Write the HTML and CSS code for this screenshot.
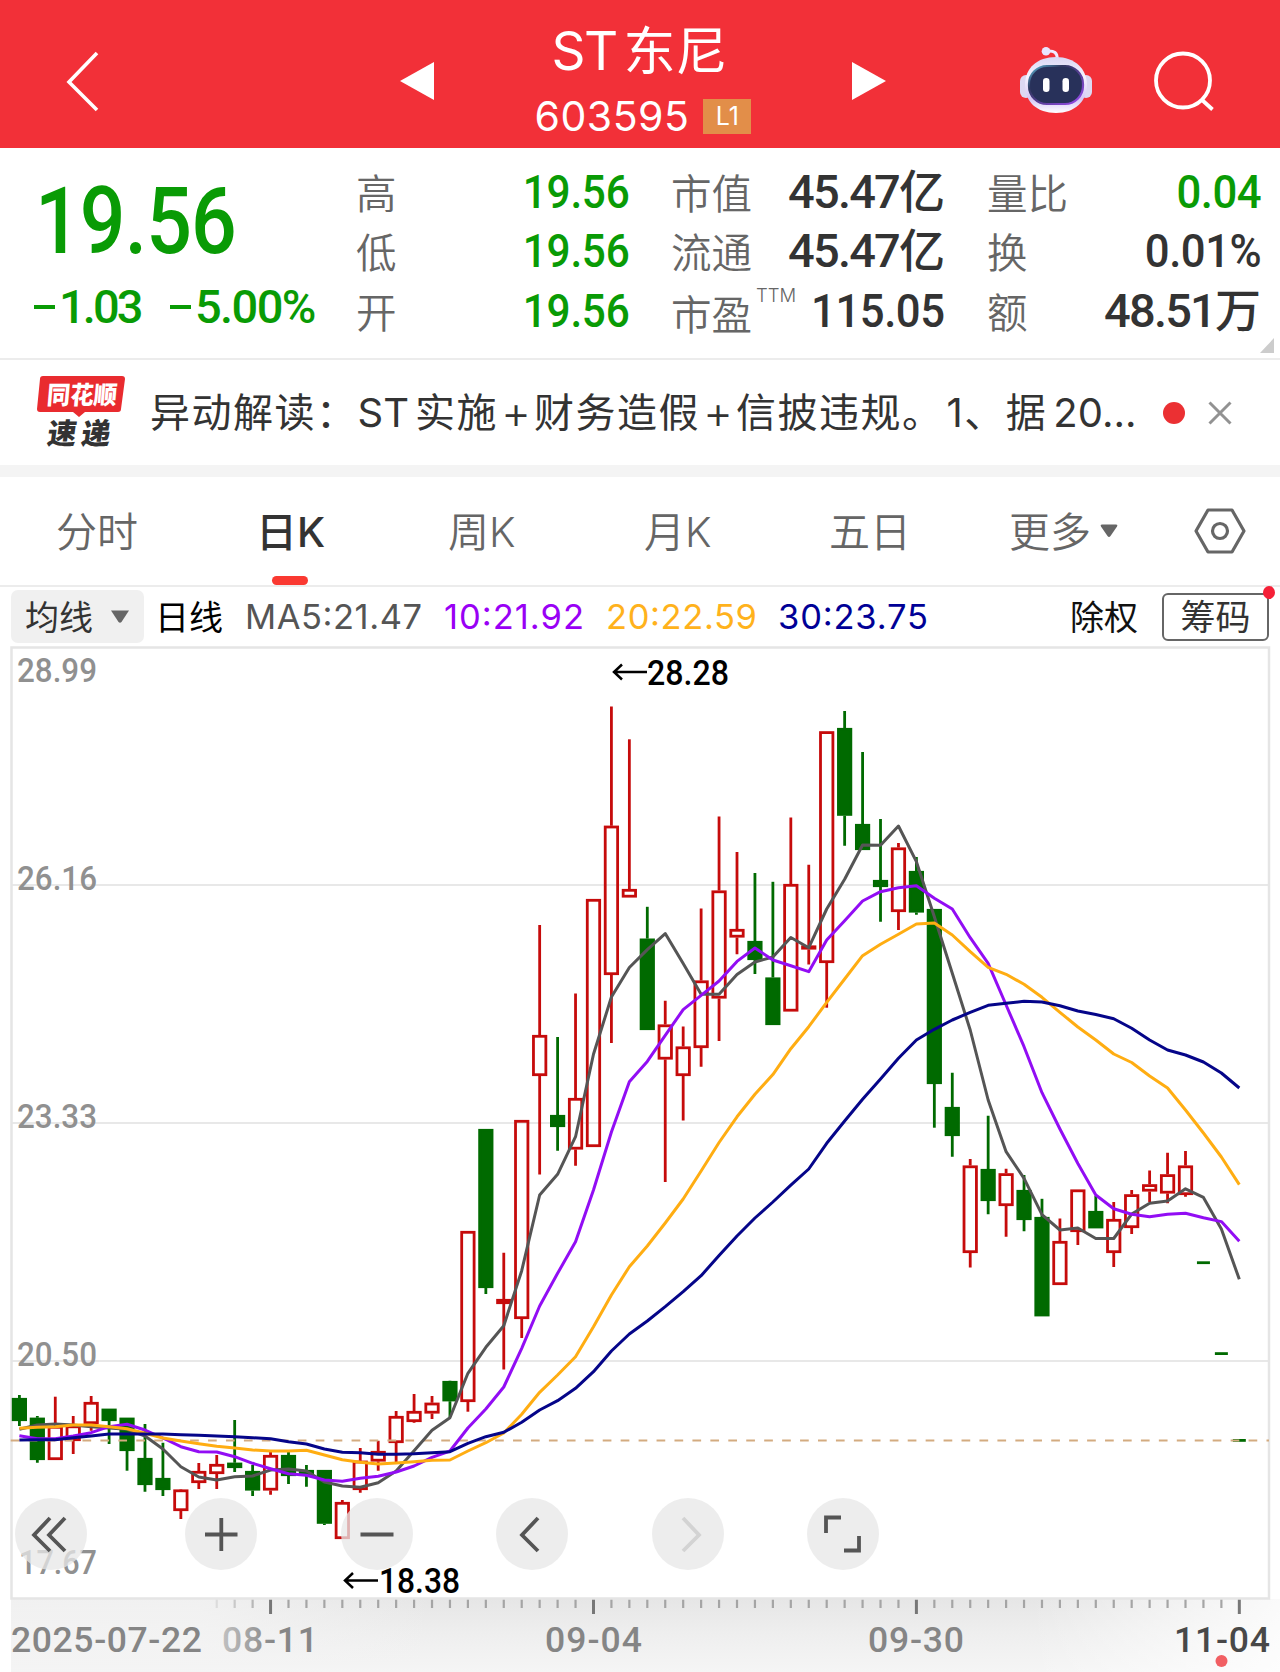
FILE: index.html
```html
<!DOCTYPE html>
<html lang="zh-CN">
<head>
<meta charset="utf-8">
<title>ST东尼 603595</title>
<link rel="stylesheet" href="styles.css">
</head>
<body>
<header class="topbar">
  <svg class="back" viewBox="0 0 34 62" width="34" height="62"><path d="M32 3 4 32 32 60" fill="none" stroke="#fff" stroke-width="3.6"/></svg>
  <svg class="prev" viewBox="0 0 34 38" width="34" height="38"><path d="M0 19 34 0V38Z" fill="#fff"/></svg>
  <div class="stock">
    <div class="name">ST<span class="name-cn">东尼</span></div>
    <div class="code">603595<span class="level">L1</span></div>
  </div>
  <svg class="next" viewBox="0 0 34 38" width="34" height="38"><path d="M34 19 0 0V38Z" fill="#fff"/></svg>
  <svg class="robot" viewBox="0 0 72 68" width="72" height="68">
    <defs>
      <linearGradient id="shell" x1="0" y1="0" x2="0" y2="1"><stop offset="0" stop-color="#d9d6f3"/><stop offset=".35" stop-color="#f7f4ff"/><stop offset=".75" stop-color="#d5c7f5"/><stop offset="1" stop-color="#fff"/></linearGradient>
      <linearGradient id="rim" x1="0" y1="0" x2="1" y2="1"><stop offset="0" stop-color="#60bcdc"/><stop offset=".3" stop-color="#30375f"/><stop offset="1" stop-color="#9b4cf0"/></linearGradient>
    </defs>
    <path d="M27 4q11-1 10 8" fill="none" stroke="#f0eaff" stroke-width="3"/><circle cx="26" cy="4.300" r="4.300" fill="#e9e4ff"/>
    <rect x="0" y="28" width="12" height="23" rx="6" fill="#ddd8f2"/><rect x="60" y="28" width="12" height="23" rx="6" fill="#ddd8f2"/>
    <path d="M36 10C55 10 67 22 67 38S55 66 36 66 5 55 5 38 17 10 36 10Z" fill="url(#shell)"/>
    <rect x="9" y="19" width="54" height="38" rx="18" fill="#28315a" stroke="url(#rim)" stroke-width="2.2"/>
    <rect x="23" y="31" width="6.5" height="14" rx="3.2" fill="#fff"/><rect x="42.500" y="31" width="6.500" height="14" rx="3.200" fill="#fff"/>
  </svg>
  <svg class="search" viewBox="0 0 62 62" width="62" height="62"><g fill="none" stroke="#fff" stroke-width="3.800"><circle cx="30" cy="30.500" r="27"/><path d="M48.500 49.500 59.500 59.500"/></g></svg>
</header>

<section class="quote">
  <div class="price">
    <div class="last">19.56</div>
    <div class="change"><span class="diff"><i class="minus"></i>1.03</span><span class="percent"><i class="minus"></i>5.00%</span></div>
  </div>
  <dl class="col col-a">
    <div><dt>高</dt><dd class="down">19.56</dd></div>
    <div><dt>低</dt><dd class="down">19.56</dd></div>
    <div><dt>开</dt><dd class="down">19.56</dd></div>
  </dl>
  <dl class="col col-b">
    <div><dt>市值</dt><dd>45.47<b>亿</b></dd></div>
    <div><dt>流通</dt><dd>45.47<b>亿</b></dd></div>
    <div><dt class="pe">市盈<sup>TTM</sup></dt><dd class="plain">115.05</dd></div>
  </dl>
  <dl class="col col-c">
    <div><dt>量比</dt><dd class="down plain">0.04</dd></div>
    <div><dt>换</dt><dd class="plain">0.01%</dd></div>
    <div><dt>额</dt><dd>48.51<b>万</b></dd></div>
  </dl>
  <i class="corner"></i>
</section>

<section class="news">
  <div class="brand">
    <svg viewBox="0 0 90 44" width="90" height="44"><path d="M6 2H85q3 0 3 3L84 35q0 3-3 3H48l-6 5-6-5H3q-3 0-3-3L3 5q0-3 3-3Z" fill="#e92b2f"/><text x="12" y="30" textLength="70" lengthAdjust="spacingAndGlyphs" class="brand-top" transform="skewX(-5)">同花顺</text></svg>
    <div class="brand-bottom">速递</div>
  </div>
  <p class="headline">异动解读：<span class="st">ST</span>实施<span class="plus">+</span>财务造假<span class="plus">+</span>信披违规。<span class="one">1</span>、据<span class="yr">20...</span></p>
  <i class="unread"></i>
  <svg class="close" viewBox="0 0 24 24" width="24" height="24"><path d="M1.500 1.500 22.500 22.500M22.500 1.500 1.500 22.500" stroke="#929292" stroke-width="3"/></svg>
</section>

<nav class="tabs">
  <span class="tab t1">分时</span>
  <span class="tab t2 active">日K</span>
  <span class="tab t3">周K</span>
  <span class="tab t4">月K</span>
  <span class="tab t5">五日</span>
  <span class="tab t6">更多<svg viewBox="0 0 18 14" width="18" height="14"><path d="M2 .5H16Q18 .5 17 2.500L10.500 12Q9 14 7.500 12L1 2.500Q0 .5 2 .5Z" fill="#666"/></svg></span>
  <svg class="hex" viewBox="0 0 52 48" width="52" height="48"><g fill="none" stroke="#666" stroke-width="3.200"><path d="M14 3H38L50 24 38 45H14L2 24Z" stroke-linejoin="round"/><circle cx="26" cy="24" r="7.500"/></g></svg>
</nav>

<div class="ma-row">
  <span class="picker"><span>均线</span><svg viewBox="0 0 18 13" width="18" height="13"><path d="M0 .5H18L10.500 12Q9 13.500 7.500 12Z" fill="#666"/></svg></span>
  <span class="period">日线</span>
  <svg class="ma-values" width="700" height="50" viewBox="0 0 700 50">
    <text x="11" y="37" textLength="177" fill="#555">MA5:21.47</text>
    <text x="210" y="37" textLength="140" fill="#9900f5">10:21.92</text>
    <text x="372" y="37" textLength="151" fill="#ffb21c">20:22.59</text>
    <text x="544" y="37" textLength="150" fill="#000096">30:23.75</text>
  </svg>
  <span class="adjust">除权</span>
  <span class="chips">筹码</span>
</div>

<main class="chart">
  <svg id="kline" width="1280" height="1026" viewBox="0 646 1280 1026">
    <defs>
      <linearGradient id="axisV" x1="0" y1="0" x2="0" y2="1"><stop offset="0" stop-color="#e6e6e6"/><stop offset=".45" stop-color="#eeeeee"/><stop offset="1" stop-color="#f5f5f5"/></linearGradient>
      <linearGradient id="fadeL" x1="0" x2="1"><stop offset="0" stop-color="#f4f4f4"/><stop offset=".45" stop-color="#f4f4f4"/><stop offset="1" stop-color="#f4f4f4" stop-opacity="0"/></linearGradient>
      <linearGradient id="fadeR" x1="0" x2="1"><stop offset="0" stop-color="#fff" stop-opacity="0"/><stop offset="1" stop-color="#fff"/></linearGradient>
      <linearGradient id="dateFade" gradientUnits="userSpaceOnUse" x1="215" x2="275" y1="0" y2="0"><stop offset="0" stop-color="#c8c8c8"/><stop offset="1" stop-color="#868686"/></linearGradient>
    </defs>
    <rect x="11" y="1599" width="1269" height="73" fill="url(#axisV)"/>
    <rect x="11" y="1599" width="420" height="73" fill="url(#fadeL)" opacity=".75"/>
    <rect x="1030" y="1599" width="250" height="73" fill="url(#fadeR)" opacity=".8"/>
    <g id="ticks"></g>
    <path d="M11.500 885H1269M11.500 1123H1269M11.500 1361H1269" stroke="#e8e8e8" stroke-width="2"/>
    <rect x="11.500" y="647.500" width="1257.500" height="951" fill="none" stroke="#e5e5e5" stroke-width="2.500"/>
    <g class="scale">
      <text x="17" y="682" textLength="80" lengthAdjust="spacingAndGlyphs">28.99</text>
      <text x="17" y="890" textLength="80" lengthAdjust="spacingAndGlyphs">26.16</text>
      <text x="17" y="1128" textLength="80" lengthAdjust="spacingAndGlyphs">23.33</text>
      <text x="17" y="1366" textLength="80" lengthAdjust="spacingAndGlyphs">20.50</text>
      <text x="19" y="1574" textLength="78" lengthAdjust="spacingAndGlyphs">17.67</text>
    </g>
    <g id="candles"></g>
    <path d="M10.700 1440.500H1269" stroke="#d3ab80" stroke-width="1.800" stroke-dasharray="8.700 9.240"/>
    <g id="averages"></g>
    <g class="mark">
      <path d="M647 672H614M622 664.500 614 672 622 679.500M378 1580.500H345M353 1573 345 1580.500 353 1588"/>
      <text x="647" y="684.500" textLength="82" lengthAdjust="spacingAndGlyphs">28.28</text>
      <text x="379" y="1593" textLength="81" lengthAdjust="spacingAndGlyphs">18.38</text>
    </g>
    <g class="axis">
      <text x="11" y="1652" textLength="191">2025-07-22</text>
      <text x="222" y="1652" textLength="96" class="fading">08-11</text>
      <text x="545" y="1652" textLength="97">09-04</text>
      <text x="868" y="1652" textLength="96">09-30</text>
      <text x="1174" y="1652" textLength="96" class="today">11-04</text>
    </g>
    <circle cx="1221.500" cy="1661" r="6" fill="#f15f63"/>
  </svg>
  <div class="controls">
    <button><svg viewBox="0 0 72 72"><path d="M35 20 19 37 35 53M50 20 34 37 50 53"/></svg></button>
    <button><svg viewBox="0 0 72 72"><path d="M20 36.500H52.500M36.300 20V53"/></svg></button>
    <button><svg viewBox="0 0 72 72"><path d="M19.500 36.500H52.500"/></svg></button>
    <button><svg viewBox="0 0 72 72"><path d="M42 20 26 37 42 53"/></svg></button>
    <button class="off"><svg viewBox="0 0 72 72"><path d="M31 20 47 37 31 53"/></svg></button>
    <button><svg viewBox="0 0 72 72"><path d="M34 19.500H19V35M37 52.500H52V38"/></svg></button>
  </div>
</main>
<script src="chart.js"></script>
</body>
</html>
```
FILE: styles.css
```css
* { box-sizing: border-box; }
body {
  margin: 0;
  width: 1280px;
  background: #fff;
  color: #333;
  font-family: Inter, "Noto Sans CJK SC", sans-serif;
  overflow-x: hidden;
}
svg { display: block; flex: none; }

.topbar {
  display: flex;
  align-items: center;
  height: 148px;
  padding-top: 14px;
  background: #f23038;
  color: #fff;
}
.back { margin-left: 65px; }
.prev { margin-left: 301px; }
.stock { width: 418px; height: 134px; margin-top: -14px; text-align: center; }
.name { height: 76px; line-height: 81px; padding-right: 7px; font-size: 53px; font-weight: 400; letter-spacing: -1.500px; white-space: nowrap; }
.name-cn { font-family: "Noto Sans CJK SC", sans-serif; font-size: 52px; letter-spacing: 0; margin-left: 7px; font-weight: 400; }
.code { display: flex; justify-content: center; align-items: center; height: 48px; margin-top: 9px; font-size: 41px; font-weight: 400; letter-spacing: .5px; }
.level { width: 48px; height: 35px; margin-left: 14px; line-height: 35px; font-size: 25px; letter-spacing: 0; background: #e28e49; text-align: center; }
.robot { margin-left: 134px; }
.search { margin-left: 61px; }

.quote {
  position: relative;
  display: flex;
  height: 212px;
  padding-top: 14px;
  border-bottom: 2px solid #ececec;
}
.price { width: 356px; color: #099b05; font-family: Roboto, sans-serif; font-weight: 500; white-space: nowrap; }
.last { width: max-content; height: 116px; margin-left: 35px; line-height: 120px; font-size: 93px; letter-spacing: -1px; transform: scaleX(.865); transform-origin: left; }
.change { display: flex; height: 56px; align-items: center; padding-left: 34px; font-size: 47px; letter-spacing: -2.300px; }
.diff { width: 136px; letter-spacing: -2.900px; }
.percent { letter-spacing: -1.600px; }
.minus { display: inline-block; width: 21px; height: 4px; margin-right: 4px; background: #099b05; vertical-align: 14px; }
.col { margin: 0; }
.col > div { display: flex; justify-content: space-between; align-items: center; height: 59.500px; }
dt { font-family: "Noto Sans CJK SC", sans-serif; font-size: 40.500px; line-height: 56px; color: #666; font-weight: 350; white-space: nowrap; }
dd { margin: 0; font-family: Roboto, "Noto Sans CJK SC", sans-serif; font-size: 47px; font-weight: 500; letter-spacing: -1.800px; line-height: 56px; white-space: nowrap; }
dd b { font-size: 46px; font-weight: 500; letter-spacing: 0; line-height: 1; }
.plain { letter-spacing: -.5px; transform: scaleX(.93); transform-origin: right; }
.down { color: #099b05; }
.col-a dd { letter-spacing: -.3px; transform: scaleX(.9); transform-origin: right; }
.col-a { width: 273px; }
.col-b { width: 274px; margin-left: 42px; }
.col-c { width: 274px; margin-left: 42px; }
.pe { display: flex; padding-top: 5px; }
sup { font-family: Inter, sans-serif; font-size: 18.500px; line-height: 20px; margin: 0 0 0 4px; letter-spacing: 0; }
.corner { position: absolute; right: 6px; bottom: 5px; width: 14px; height: 15px; background: #ccc; clip-path: polygon(100% 0, 100% 100%, 0 100%); }

.news { display: flex; align-items: center; height: 117px; border-bottom: 12px solid #f4f4f4; }
.brand { width: 90px; margin-left: 37px; height: 78px; }
.brand-top { font: 900 25px "Noto Sans CJK SC", sans-serif; fill: #fff; }
.brand-bottom { margin: -1px 0 0 11px; font: 900 29px/28px "Noto Sans CJK SC", sans-serif; letter-spacing: 5px; transform: skewX(-8deg); }
.headline { width: 1000px; margin: 0 0 0 23px; font-size: 40px; font-weight: 400; line-height: 60px; letter-spacing: 1.500px; white-space: nowrap; font-family: Inter, "Noto Sans CJK SC", sans-serif; }
.st { letter-spacing: 0; margin-right: 6px; }
.plus { display: inline-block; width: 36px; font-size: 46px; line-height: 40px; vertical-align: -2px; text-align: center; letter-spacing: 0; font-weight: 350; }
.one { margin-left: 3px; }
.yr { margin-left: 6px; letter-spacing: 0; }
.unread { width: 22px; height: 22px; margin-left: 13px; border-radius: 50%; background: #eb3033; }
.close { margin-left: 23px; }

.tabs {
  display: grid;
  grid-template-columns: 194px 254px 196px 185px 180px 185px 60px;
  align-items: center;
  height: 110px;
  border-bottom: 2px solid #ececec;
}
.tab { padding-top: 2px; font-size: 41px; line-height: 60px; color: #666; font-weight: 350; white-space: nowrap; }
.t1 { padding-left: 56px; }
.t2 { padding-left: 62px; }
.t6 { display: flex; align-items: center; gap: 9px; }
.t6 svg { margin-top: -2px; }
.active { position: relative; color: #333; font-weight: 500; }
.active::after { content: ""; position: absolute; left: 78px; bottom: -23px; width: 36px; height: 9px; border-radius: 5px; background: #fa3931; }

.ma-row { display: flex; align-items: center; height: 59px; padding-left: 11px; font-family: "Noto Sans CJK SC", sans-serif; font-size: 34px; }
.picker { display: flex; align-items: center; justify-content: space-between; width: 133px; height: 53px; padding: 0 15px 0 14px; border-radius: 7px; background: #f0f0f0; }
.picker span, .period, .adjust { margin-top: -3px; }
.period { width: 79px; margin-left: 11px; color: #000; }
.ma-values text { font: 400 34.500px Inter, sans-serif; }
.adjust { width: 70px; margin-left: 136px; color: #111; }
.chips { position: relative; width: 107px; height: 48px; margin-left: 22px; border: 2px solid #666; border-radius: 6px; line-height: 40px; font-size: 35px; text-align: center; }
.chips::after { content: ""; position: absolute; right: -8px; top: -9px; width: 12px; height: 13px; border-radius: 50%; background: #f52037; }

.chart { position: relative; height: 1026px; }
.scale text { font: 500 34px Roboto, sans-serif; fill: #909090; }
.axis text { font: 500 35.500px Roboto, sans-serif; fill: #858585; }
.axis .fading { fill: url(#dateFade); }
.axis .today { fill: #484848; }
.mark text { font: 500 35px Roboto, sans-serif; fill: #000; }
.mark path { fill: none; stroke: #000; stroke-width: 2.500; }
.red { stroke: #c60b0b; fill: none; stroke-width: 2.800; }
.green { stroke: #006a00; fill: #006a00; stroke-width: 2.800; }
.ma { fill: none; stroke-width: 3; stroke-linejoin: round; }
.controls { position: absolute; left: 15px; top: 852px; display: flex; }
.controls button { width: 72px; height: 72px; padding: 0; margin-right: 83.600px; border: 0; border-radius: 50%; background: rgba(231, 231, 231, .76); }
.controls button:first-child { margin-right: 98px; }
.controls path { fill: none; stroke: #555; stroke-width: 3.800; }
.controls .off path { stroke: #d3d3d3; }
```
FILE: chart.js
```js
// Daily bars as plotted heights: [up, high, low, bodyTop, bodyBottom]
const bars = [
[0,1395,1426,1398,1421],[0,1416,1462.7,1417.7,1460],[1,1396.7,1459,1426,1460],[1,1416,1454,1425.5,1441],
[1,1396,1430.7,1402,1424],[0,1408.7,1444,1408.7,1421],[0,1417.7,1470.7,1417.7,1451],[0,1424,1491.7,1458,1485],
[0,1442.7,1496,1478,1490],[1,1489,1519,1489.5,1511],[1,1463,1489,1471,1483],[1,1455,1489,1464,1474],
[0,1420,1472,1462.7,1468],[0,1465,1496,1471,1490.5],[1,1452,1494.7,1455,1490.5],[0,1450,1484,1455,1476],
[0,1465,1486.7,1470,1475],[0,1470,1525,1470,1523.7],[1,1500,1539,1502,1539],[1,1448,1492.7,1460.7,1490],
[1,1440.7,1470.7,1451,1461.5],[1,1411,1464,1416,1443],[1,1394,1422.7,1411,1422],[1,1396,1419,1402.7,1413.5],
[0,1380.7,1417,1381,1401.3],[1,1231,1411.7,1231,1402],[0,1129,1294,1129,1288],[1,1252.7,1369.5,1299,1304],
[1,1120,1338,1120,1319],[1,925,1174.6,1035,1076],[0,1037,1150.7,1115,1127],[1,993.6,1165.7,1098,1149.5],
[1,899,1147,899,1147],[1,706.4,1043,825.7,975],[1,739.3,897,889,897.5],[0,906.8,1030,938.6,1030],
[1,1000.7,1182,1024.5,1059.5],[1,1026.4,1120.4,1046.5,1076],[1,908.6,1066.8,980.5,1048],[1,816.4,1041,890.5,998.5],
[1,852,954.3,929,937.5],[0,873,974,941,960],[0,881.8,1025,977.5,1025],[1,817.5,1011,884,1011.5],
[1,864.7,964.5,945.5,949.5],[1,731.3,1007.7,731.3,963],[0,711,845.7,728,815.7],[0,752,850,824,850],
[0,819,921.7,880,887],[1,843,930,847.5,912],[0,857,914.7,871,912.5],[0,909,1127.7,909,1084],
[0,1072.7,1156.7,1107,1136],[1,1159,1267.6,1165.5,1253],[0,1115.7,1214.3,1169,1201],[1,1168.7,1236.8,1173.3,1206],
[0,1175,1231.3,1190,1220],[0,1198.8,1316.3,1217,1316.3],[1,1218.5,1285,1241,1285],[1,1189.5,1245,1189.5,1232],
[0,1195.7,1228,1211,1228.3],[1,1202,1267,1219,1253],[1,1190,1234,1194.3,1228],[1,1170.4,1202,1184.3,1191.5],
[1,1152.8,1203.3,1174.3,1193.5],[1,1151,1196.7,1165.5,1195]
];
const averages = {
'#555555': [1429.3,1425,1424,1425,1426.7,1428,1429.3,1436,1449,1466.7,1477,1480,1476.7,1476,1470,1469,1471,1482,1486,1487.3,1482.7,1471,1450.7,1430.3,1417.7,1373.3,1347.3,1325.7,1270.7,1195,1174.3,1136.7,1054.3,997,967.5,949.6,933.6,963.6,994.3,994.3,974.6,962,957,937.5,947.7,909,879.3,845,845.3,826,861.7,916.7,973.3,1030,1100,1151.7,1178.3,1214.7,1230,1228,1238.5,1238.5,1214,1203.3,1201,1188.8,1197.4,1229,1279.3],
'#920df4': [1435.7,1438.7,1438.7,1436,1432.7,1426.7,1424.3,1430,1438,1446.7,1451.7,1452,1456.7,1463.3,1468.7,1473.7,1475.3,1480,1481.3,1478.3,1476.3,1472,1466,1457.3,1451,1428,1409,1387,1348.3,1306,1273.3,1241.7,1190,1132,1081.8,1061.4,1035.4,1009.6,995.4,981,961.4,948,960,965.7,971.7,940,920.7,901,891.7,887.7,885.7,898.3,909,937.7,963.3,1005,1046.7,1092.7,1129,1163.5,1195,1208.8,1214.3,1216.8,1214.3,1213.3,1217.8,1221.6,1241.3],
'#ffad12': [1428.3,1427.3,1426.7,1425,1425,1426.7,1428.7,1433.3,1438,1441,1443.7,1446.3,1448,1450,1451,1451,1450.3,1455,1459.7,1462.3,1464,1463,1461.7,1460.3,1460,1451,1442.7,1433,1414.3,1392.3,1375,1356.7,1326.7,1295,1266.7,1246,1223,1199,1171,1142.5,1116.8,1094.3,1074.6,1048.7,1026.7,1002.3,979,955.7,944.3,934.3,924,923,935,951.7,967.3,974.3,984.3,997.3,1012.3,1027,1040,1054,1062.5,1076,1088,1110,1133,1157,1184.6],
'#050589': [1440,1439.7,1439.7,1437.7,1436,1434,1434,1434,1434,1434.7,1435.3,1436,1436.7,1437.7,1438.7,1441.7,1444,1449,1452.3,1452.7,1454.3,1454.3,1453.7,1452.7,1451.7,1443.3,1436.7,1432.3,1422.3,1410,1400.7,1388.3,1371.7,1351,1334,1321,1306.7,1291.7,1275.7,1255.5,1236,1218,1202,1185.2,1169,1143.3,1121,1099.3,1079,1058.3,1040,1029.3,1020,1012.3,1005.3,1003.3,1001.3,1002,1005.7,1011,1014.5,1018.7,1028.3,1040,1050,1055,1062,1073,1088]
};
const NS = 'http://www.w3.org/2000/svg';
const x = i => 19.4 + i * 17.94;
function add(parent, tag, attrs) {
  const el = document.createElementNS(NS, tag);
  for (const k in attrs) el.setAttribute(k, attrs[k]);
  document.getElementById(parent).appendChild(el);
}
bars.forEach(([up, hi, lo, top, bottom], i) => {
  const cx = x(i), cls = up ? 'red' : 'green';
  let d = '';
  if (hi < top) d += `M${cx} ${hi}V${top}`;
  if (lo > bottom) d += `M${cx} ${bottom}V${lo}`;
  if (d) add('candles', 'path', { d, class: cls });
  add('candles', 'rect', { x: cx - 6.2, y: top + 1.3, width: 12.4, height: bottom - top - 2.6, class: cls });
});
// One-price limit-down sessions
[[66, 1262.7], [67, 1353.6], [68, 1440.4]].forEach(([i, y]) =>
  add('candles', 'path', { d: `M${x(i) - 6.5} ${y}h13`, class: 'green' }));
Object.entries(averages).forEach(([stroke, ys]) =>
  add('averages', 'polyline', { points: ys.map((y, i) => `${x(i)},${y}`).join(' '), stroke, class: 'ma' }));
for (let i = 11; i < 69; i++) {
  const major = [14, 32, 50, 68].includes(i);
  const opacity = i < 14 ? (i - 10) * .25 : 1;
  add('ticks', 'path', { d: `M${x(i)} 1599V${major ? 1614 : 1608}`, stroke: major ? '#777' : '#a5a5a5', 'stroke-width': major ? 3 : 2.2, opacity });
}
```
